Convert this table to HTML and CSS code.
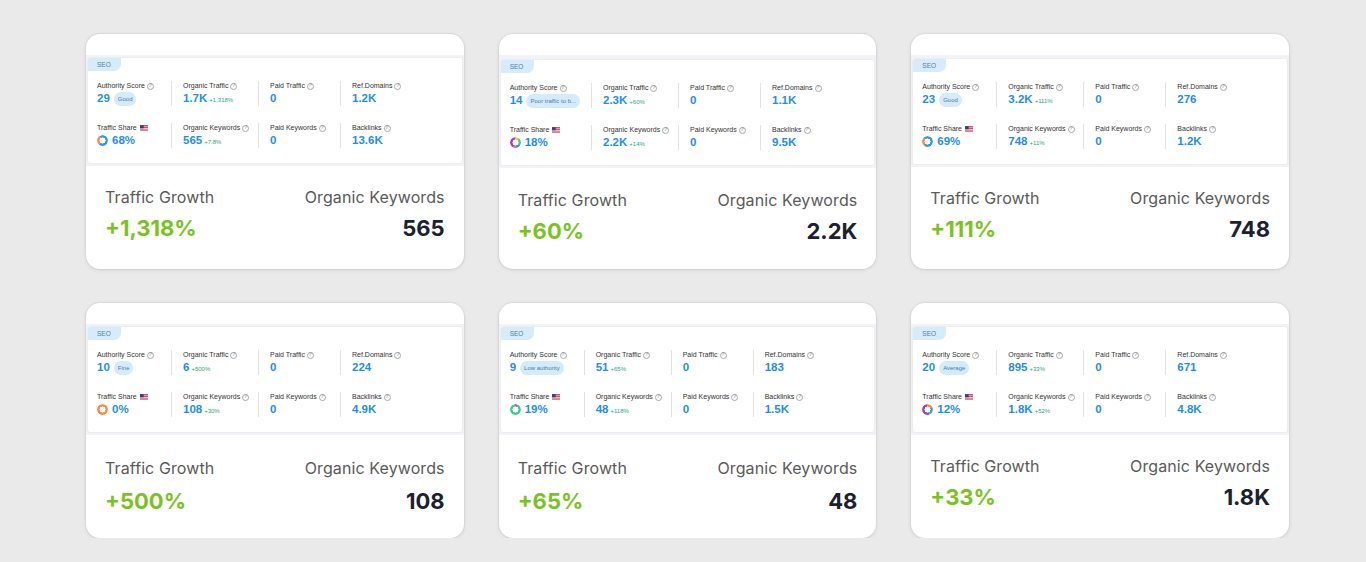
FILE: index.html
```html
<!DOCTYPE html>
<html lang="en">
<head>
<meta charset="utf-8">
<title>SEO growth cards</title>
<link rel="stylesheet" href="styles.css">
</head>
<body>
<main class="grid">

  <article class="card">
    <div class="shot">
      <div class="panel">
        <div class="tab">SEO</div>
        <div class="metrics">
          <div class="cell"><div class="lbl">Authority Score <i class="help"></i></div><div class="val">29 <span class="badge">Good</span></div></div>
          <div class="cell"><div class="lbl">Organic Traffic <i class="help"></i></div><div class="val">1.7K <span class="delta">+1,318%</span></div></div>
          <div class="cell"><div class="lbl">Paid Traffic <i class="help"></i></div><div class="val">0</div></div>
          <div class="cell"><div class="lbl">Ref.Domains <i class="help"></i></div><div class="val">1.2K</div></div>
          <div class="cell"><div class="lbl">Traffic Share <svg class="flag" viewBox="0 0 13 9"><rect width="13" height="9" fill="#c8243c"/><rect y="2" width="13" height="1.2" fill="#fff"/><rect y="4.5" width="13" height="1.2" fill="#fff"/><rect y="7" width="13" height="1.2" fill="#fff"/><rect width="6" height="5" fill="#3c3b8e"/></svg></div><div class="val"><span class="donut donut--d1"></span>68%</div></div>
          <div class="cell"><div class="lbl">Organic Keywords <i class="help"></i></div><div class="val">565 <span class="delta">+7.8%</span></div></div>
          <div class="cell"><div class="lbl">Paid Keywords <i class="help"></i></div><div class="val">0</div></div>
          <div class="cell"><div class="lbl">Backlinks <i class="help"></i></div><div class="val">13.6K</div></div>
        </div>
      </div>
    </div>
    <div class="stats">
      <div class="stat"><div class="stat-lbl">Traffic Growth</div><div class="stat-val growth">+1,318%</div></div>
      <div class="stat stat--right"><div class="stat-lbl">Organic Keywords</div><div class="stat-val">565</div></div>
    </div>
  </article>

  <article class="card card--shift">
    <div class="shot">
      <div class="panel">
        <div class="tab">SEO</div>
        <div class="metrics">
          <div class="cell"><div class="lbl">Authority Score <i class="help"></i></div><div class="val">14 <span class="badge">Poor traffic to b...</span></div></div>
          <div class="cell"><div class="lbl">Organic Traffic <i class="help"></i></div><div class="val">2.3K <span class="delta">+60%</span></div></div>
          <div class="cell"><div class="lbl">Paid Traffic <i class="help"></i></div><div class="val">0</div></div>
          <div class="cell"><div class="lbl">Ref.Domains <i class="help"></i></div><div class="val">1.1K</div></div>
          <div class="cell"><div class="lbl">Traffic Share <svg class="flag" viewBox="0 0 13 9"><rect width="13" height="9" fill="#c8243c"/><rect y="2" width="13" height="1.2" fill="#fff"/><rect y="4.5" width="13" height="1.2" fill="#fff"/><rect y="7" width="13" height="1.2" fill="#fff"/><rect width="6" height="5" fill="#3c3b8e"/></svg></div><div class="val"><span class="donut donut--d2"></span>18%</div></div>
          <div class="cell"><div class="lbl">Organic Keywords <i class="help"></i></div><div class="val">2.2K <span class="delta">+14%</span></div></div>
          <div class="cell"><div class="lbl">Paid Keywords <i class="help"></i></div><div class="val">0</div></div>
          <div class="cell"><div class="lbl">Backlinks <i class="help"></i></div><div class="val">9.5K</div></div>
        </div>
      </div>
    </div>
    <div class="stats">
      <div class="stat"><div class="stat-lbl">Traffic Growth</div><div class="stat-val growth">+60%</div></div>
      <div class="stat stat--right"><div class="stat-lbl">Organic Keywords</div><div class="stat-val">2.2K</div></div>
    </div>
  </article>

  <article class="card card--shift1">
    <div class="shot">
      <div class="panel">
        <div class="tab">SEO</div>
        <div class="metrics">
          <div class="cell"><div class="lbl">Authority Score <i class="help"></i></div><div class="val">23 <span class="badge">Good</span></div></div>
          <div class="cell"><div class="lbl">Organic Traffic <i class="help"></i></div><div class="val">3.2K <span class="delta">+111%</span></div></div>
          <div class="cell"><div class="lbl">Paid Traffic <i class="help"></i></div><div class="val">0</div></div>
          <div class="cell"><div class="lbl">Ref.Domains <i class="help"></i></div><div class="val">276</div></div>
          <div class="cell"><div class="lbl">Traffic Share <svg class="flag" viewBox="0 0 13 9"><rect width="13" height="9" fill="#c8243c"/><rect y="2" width="13" height="1.2" fill="#fff"/><rect y="4.5" width="13" height="1.2" fill="#fff"/><rect y="7" width="13" height="1.2" fill="#fff"/><rect width="6" height="5" fill="#3c3b8e"/></svg></div><div class="val"><span class="donut donut--d3"></span>69%</div></div>
          <div class="cell"><div class="lbl">Organic Keywords <i class="help"></i></div><div class="val">748 <span class="delta">+11%</span></div></div>
          <div class="cell"><div class="lbl">Paid Keywords <i class="help"></i></div><div class="val">0</div></div>
          <div class="cell"><div class="lbl">Backlinks <i class="help"></i></div><div class="val">1.2K</div></div>
        </div>
      </div>
    </div>
    <div class="stats">
      <div class="stat"><div class="stat-lbl">Traffic Growth</div><div class="stat-val growth">+111%</div></div>
      <div class="stat stat--right"><div class="stat-lbl">Organic Keywords</div><div class="stat-val">748</div></div>
    </div>
  </article>

  <article class="card card--low">
    <div class="shot">
      <div class="panel">
        <div class="tab">SEO</div>
        <div class="metrics">
          <div class="cell"><div class="lbl">Authority Score <i class="help"></i></div><div class="val">10 <span class="badge">Fine</span></div></div>
          <div class="cell"><div class="lbl">Organic Traffic <i class="help"></i></div><div class="val">6 <span class="delta">+500%</span></div></div>
          <div class="cell"><div class="lbl">Paid Traffic <i class="help"></i></div><div class="val">0</div></div>
          <div class="cell"><div class="lbl">Ref.Domains <i class="help"></i></div><div class="val">224</div></div>
          <div class="cell"><div class="lbl">Traffic Share <svg class="flag" viewBox="0 0 13 9"><rect width="13" height="9" fill="#c8243c"/><rect y="2" width="13" height="1.2" fill="#fff"/><rect y="4.5" width="13" height="1.2" fill="#fff"/><rect y="7" width="13" height="1.2" fill="#fff"/><rect width="6" height="5" fill="#3c3b8e"/></svg></div><div class="val"><span class="donut donut--d4"></span>0%</div></div>
          <div class="cell"><div class="lbl">Organic Keywords <i class="help"></i></div><div class="val">108 <span class="delta">+30%</span></div></div>
          <div class="cell"><div class="lbl">Paid Keywords <i class="help"></i></div><div class="val">0</div></div>
          <div class="cell"><div class="lbl">Backlinks <i class="help"></i></div><div class="val">4.9K</div></div>
        </div>
      </div>
    </div>
    <div class="stats">
      <div class="stat"><div class="stat-lbl">Traffic Growth</div><div class="stat-val growth">+500%</div></div>
      <div class="stat stat--right"><div class="stat-lbl">Organic Keywords</div><div class="stat-val">108</div></div>
    </div>
  </article>

  <article class="card card--low">
    <div class="shot">
      <div class="panel">
        <div class="tab">SEO</div>
        <div class="metrics">
          <div class="cell"><div class="lbl">Authority Score <i class="help"></i></div><div class="val">9 <span class="badge">Low authority</span></div></div>
          <div class="cell"><div class="lbl">Organic Traffic <i class="help"></i></div><div class="val">51 <span class="delta">+65%</span></div></div>
          <div class="cell"><div class="lbl">Paid Traffic <i class="help"></i></div><div class="val">0</div></div>
          <div class="cell"><div class="lbl">Ref.Domains <i class="help"></i></div><div class="val">183</div></div>
          <div class="cell"><div class="lbl">Traffic Share <svg class="flag" viewBox="0 0 13 9"><rect width="13" height="9" fill="#c8243c"/><rect y="2" width="13" height="1.2" fill="#fff"/><rect y="4.5" width="13" height="1.2" fill="#fff"/><rect y="7" width="13" height="1.2" fill="#fff"/><rect width="6" height="5" fill="#3c3b8e"/></svg></div><div class="val"><span class="donut donut--d5"></span>19%</div></div>
          <div class="cell"><div class="lbl">Organic Keywords <i class="help"></i></div><div class="val">48 <span class="delta">+118%</span></div></div>
          <div class="cell"><div class="lbl">Paid Keywords <i class="help"></i></div><div class="val">0</div></div>
          <div class="cell"><div class="lbl">Backlinks <i class="help"></i></div><div class="val">1.5K</div></div>
        </div>
      </div>
    </div>
    <div class="stats">
      <div class="stat"><div class="stat-lbl">Traffic Growth</div><div class="stat-val growth">+65%</div></div>
      <div class="stat stat--right"><div class="stat-lbl">Organic Keywords</div><div class="stat-val">48</div></div>
    </div>
  </article>

  <article class="card">
    <div class="shot">
      <div class="panel">
        <div class="tab">SEO</div>
        <div class="metrics">
          <div class="cell"><div class="lbl">Authority Score <i class="help"></i></div><div class="val">20 <span class="badge">Average</span></div></div>
          <div class="cell"><div class="lbl">Organic Traffic <i class="help"></i></div><div class="val">895 <span class="delta">+33%</span></div></div>
          <div class="cell"><div class="lbl">Paid Traffic <i class="help"></i></div><div class="val">0</div></div>
          <div class="cell"><div class="lbl">Ref.Domains <i class="help"></i></div><div class="val">671</div></div>
          <div class="cell"><div class="lbl">Traffic Share <svg class="flag" viewBox="0 0 13 9"><rect width="13" height="9" fill="#c8243c"/><rect y="2" width="13" height="1.2" fill="#fff"/><rect y="4.5" width="13" height="1.2" fill="#fff"/><rect y="7" width="13" height="1.2" fill="#fff"/><rect width="6" height="5" fill="#3c3b8e"/></svg></div><div class="val"><span class="donut donut--d6"></span>12%</div></div>
          <div class="cell"><div class="lbl">Organic Keywords <i class="help"></i></div><div class="val">1.8K <span class="delta">+52%</span></div></div>
          <div class="cell"><div class="lbl">Paid Keywords <i class="help"></i></div><div class="val">0</div></div>
          <div class="cell"><div class="lbl">Backlinks <i class="help"></i></div><div class="val">4.8K</div></div>
        </div>
      </div>
    </div>
    <div class="stats">
      <div class="stat"><div class="stat-lbl">Traffic Growth</div><div class="stat-val growth">+33%</div></div>
      <div class="stat stat--right"><div class="stat-lbl">Organic Keywords</div><div class="stat-val">1.8K</div></div>
    </div>
  </article>

</main>
</body>
</html>
```

FILE: styles.css
```css
* { box-sizing: border-box; }

html, body {
  margin: 0;
  padding: 0;
  background: #eaeaea;
}

body {
  font-family: "Liberation Sans", Arial, sans-serif;
}

.grid {
  display: grid;
  grid-template-columns: repeat(3, 1fr);
  column-gap: 35px;
  row-gap: 34px;
  width: 1203px;
  margin: 34px 0 0 86px;
}

.card {
  background: #fff;
  border-radius: 14px;
  box-shadow: 0 0 0 1px rgba(0,0,0,0.04), 0 1px 4px rgba(0,0,0,0.10);
  overflow: hidden;
  padding-top: 21px;
  height: 235px;
  display: flex;
  flex-direction: column;
}

/* embedded screenshot of the SEO widget */
.shot {
  background: #f1f3f6;
  padding: 3px 2px;
}

.card--shift .shot { padding-top: 5px; }
.card--shift1 .shot { padding-top: 4px; }

.panel {
  background: #fff;
  border-radius: 2px;
  height: 105px;
  box-shadow: 0 0 0 0.5px #e6e8ec;
}

.tab {
  width: 33px;
  height: 13px;
  background: #d7ecfb;
  color: #4a7fae;
  font-size: 6.5px;
  line-height: 13px;
  padding-left: 9px;
  border-radius: 2px 0 7px 0;
}

.metrics {
  display: grid;
  grid-template-columns: minmax(74px, auto) 87px 82px 1fr;
  row-gap: 17px;
  margin-top: 10px;
  padding-left: 9px;
}

.cell {
  height: 25px;
  padding: 0 11px;
  border-left: 1px solid #e2e2e2;
  min-width: 0;
}

.cell:nth-child(4n+1) {
  border-left: 0;
  padding-left: 0;
}

.lbl {
  font-size: 7px;
  line-height: 10px;
  color: #333;
  white-space: nowrap;
  display: flex;
  align-items: center;
  gap: 2px;
  width: max-content;
}

.help {
  flex-shrink: 0;
  display: inline-block;
  width: 7px;
  height: 7px;
  border: 0.8px solid #a8a8a8;
  border-radius: 50%;
  position: relative;
}

.help::after {
  content: "?";
  position: absolute;
  left: 0;
  right: 0;
  top: -1.3px;
  text-align: center;
  font-size: 5px;
  line-height: 7px;
  color: #a0a0a0;
  font-weight: bold;
}

.flag {
  flex-shrink: 0;
  width: 8px;
  height: 6px;
  margin-left: 1px;
}

.val {
  display: flex;
  align-items: baseline;
  gap: 3px;
  font-size: 11.5px;
  line-height: 15px;
  font-weight: bold;
  color: #1d8ef0;
  white-space: nowrap;
}

.delta {
  font-size: 6px;
  font-weight: normal;
  color: #2aa877;
  margin-left: -1px;
}

.badge {
  align-self: center;
  height: 14px;
  line-height: 14px;
  padding: 0 4px;
  border-radius: 7px;
  background: #d3ebfc;
  color: #4b7ca8;
  font-size: 6px;
  font-weight: normal;
  margin-left: 1px;
}

.donut {
  align-self: center;
  width: 11px;
  height: 11px;
  border-radius: 50%;
  margin-right: 1px;
  -webkit-mask: radial-gradient(circle, transparent 2.9px, #000 3.2px);
  mask: radial-gradient(circle, transparent 2.9px, #000 3.2px);
}

.donut--d1 { background: conic-gradient(#2d9cf0 0 62%, #ff8a3d 62% 92%, #2d9cf0 92%); }
.donut--d2 { background: conic-gradient(#f2c12e 0 12%, #3ecf8e 12% 35%, #2d9cf0 35% 48%, #ef5b9c 48% 58%, #a33fc4 58% 100%); }
.donut--d3 { background: conic-gradient(#2d9cf0 0 60%, #ff8a3d 60% 88%, #2d9cf0 88%); }
.donut--d4 { background: #ff8a3d; }
.donut--d5 { background: conic-gradient(#e2458a 0 6%, #3ecf8e 6% 100%); }
.donut--d6 { background: conic-gradient(#ff8a3d 0 18%, #2d9cf0 18% 38%, #3ecf8e 38% 45%, #a33fc4 45% 100%); }

/* bottom figures */
.stats {
  display: flex;
  justify-content: space-between;
  padding: 21px 19px 0;
  font-family: Inter, "Noto Sans", sans-serif;
}

.card--shift .stats { padding-top: 22px; }
.card--low .stats { padding-top: 23px; }
.card--low .stat-val { margin-top: 9px; }

.stat--right { text-align: right; }

.stat-lbl {
  font-size: 16px;
  line-height: 20px;
  color: #5a5a5a;
  letter-spacing: 0.1px;
}

.stat-val {
  margin-top: 7px;
  font-size: 22px;
  line-height: 28px;
  font-weight: 700;
  color: #1b2130;
}

.stat-val.growth { color: #7ac31f; }
```
